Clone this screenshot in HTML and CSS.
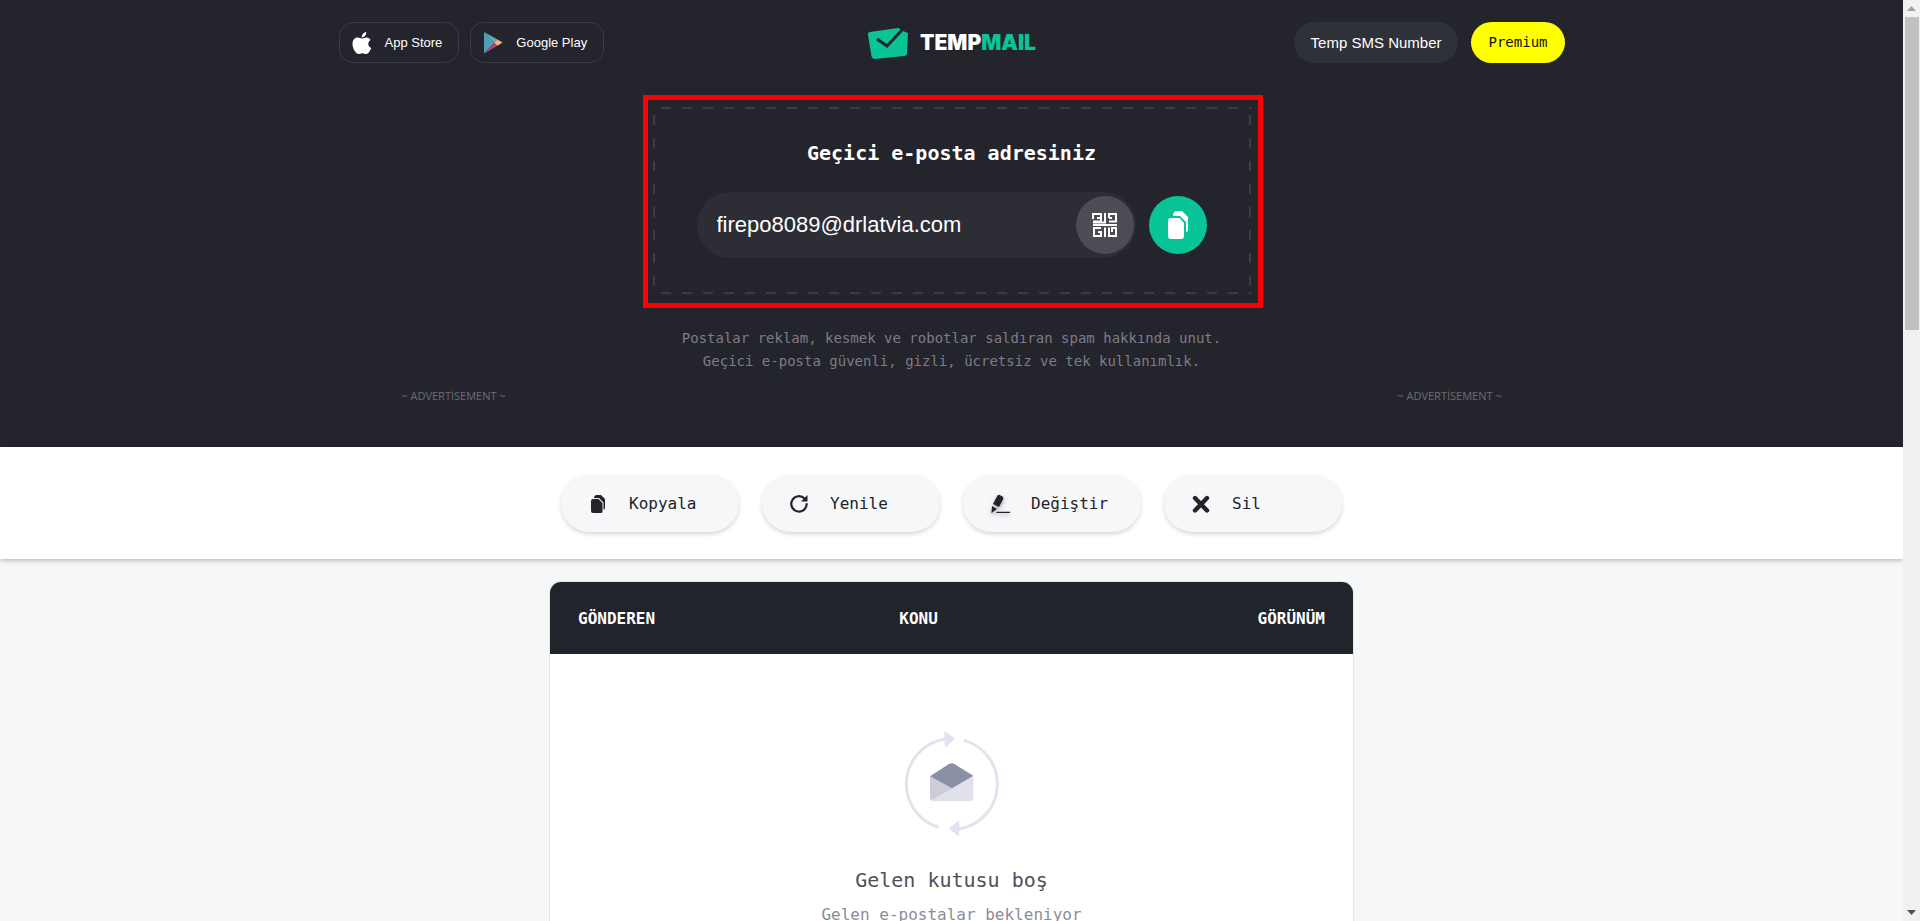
FILE: index.html
```html
<!DOCTYPE html>
<html lang="tr">
<head>
<meta charset="utf-8">
<meta name="viewport" content="width=device-width, initial-scale=1">
<title>Temp Mail</title>
<link rel="stylesheet" href="styles.css">
</head>
<body>
<div class="window">
  <div class="page">
    <section class="hero">
      <header class="topbar">
        <nav class="stores">
          <a class="store" href="#">
            <svg width="20" height="24" viewBox="0 0 20 24" fill="#fff" aria-hidden="true"><path d="M14.2 1c.2 1.700-.4 3.100-1.300 4.100-.9 1-2 1.500-3.200 1.400-.1-1.500.5-2.900 1.300-3.800C11.900 1.700 13.200 1.100 14.200 1z"/><path d="M18.600 9.100c-1.600 1-2.300 2.300-2.300 3.900 0 1.900 1.100 3.300 2.900 4-.5 1.600-1.300 3-2.300 4.300-.8 1.100-1.600 1.700-2.700 1.700-1.400 0-2-.8-3.900-.8s-2.600.8-3.900.8c-1.100 0-2-.7-2.900-1.900C1.600 18.500.5 15.600.5 12.900c0-3.800 2.200-6.400 5.200-6.400 1.700 0 3 1 4.300 1 1.200 0 2.700-1.100 4.700-1.100 1.600 0 3 .9 3.900 2.700z"/></svg>
            <span>App Store</span>
          </a>
          <a class="store" href="#">
            <svg width="20" height="22" viewBox="0 0 20 22" aria-hidden="true"><path d="M1 0v21.500L11 11z" fill="#4c9fb8"/><path d="M1 0l13.500 7.500L11 11z" fill="#5fb0a8"/><path d="M14.500 7.500L19.500 10.500l-5 3.200L11 11z" fill="#f6b08a"/><path d="M1 21.500L11 11l3.500 2.700z" fill="#b8456c"/></svg>
            <span>Google Play</span>
          </a>
        </nav>
        <a class="logo" href="#">
          <svg width="42" height="32" viewBox="0 0 42 32" aria-hidden="true"><path d="M3 5L31 1q2 0 2.500 2L41 6l-1 20q0 3-3 3L8 32q-3 0-3.500-3L1 8q-.3-3 2-3z" fill="#08c497"/><path d="M10 12l10 7L36 2" fill="none" stroke="#24242d" stroke-width="3"/><path d="M33 0h9v5l-4-1z" fill="#24242d"/></svg>
          <span class="wordmark">TEMP<span class="wordmark-mail">MAIL</span></span>
        </a>
        <nav class="account">
          <a class="pill pill-sms" href="#">Temp SMS Number</a>
          <a class="pill pill-premium" href="#">Premium</a>
        </nav>
      </header>

      <div class="hero-grid">
        <p class="ad">~ ADVERTİSEMENT ~</p>
        <div class="hero-main">
          <div class="address-box">
            <div class="highlight"></div>
            <h1 class="address-title"><label for="mail">Geçici e-posta adresiniz</label></h1>
            <div class="address-row">
              <div class="address-field">
                <input id="mail" class="address-input" type="text" value="firepo8089@drlatvia.com" readonly>
                <button class="round round-qr" type="button" aria-label="QR">
                  <svg width="26" height="26" viewBox="0 0 26 26" fill="none" stroke="#fff" stroke-width="2" aria-hidden="true"><path d="M5 6h3M1 7V2h8v7.500H1M13 1v9.500H1M13 13H1M17 6V2h7v7.500h-7M20 6h-3M13 13h12M9 16H2v8h7v-4H6M13 15.500V25M17 15.500V24h7v-8h-4v4"/></svg>
                </button>
              </div>
              <button class="round round-copy" type="button" aria-label="Kopyala">
                <svg width="20" height="28" viewBox="0 0 20 28" fill="#fff" aria-hidden="true"><path d="M3 7h8.500L16 12v13q0 3-3 3H3q-3 0-3-3V10q0-3 3-3z"/><path d="M5 5q0-5 4-5h5l6 6v12q0 3-2 3V11l-6-6z"/></svg>
              </button>
            </div>
          </div>
          <p class="intro">Postalar reklam, kesmek ve robotlar saldıran spam hakkında unut.<br>Geçici e-posta güvenli, gizli, ücretsiz ve tek kullanımlık.</p>
        </div>
        <p class="ad">~ ADVERTİSEMENT ~</p>
      </div>
    </section>

    <section class="actions">
      <button class="action" type="button">
        <svg width="20" height="20" viewBox="0 0 20 20" fill="#22232b" aria-hidden="true"><path d="M5 5h5.500l4 4v8.500q0 1.500-1.500 1.500H5q-2 0-2-2V7q0-2 2-2z"/><path d="M6 4q0-3 3-3h4l4 4v9q0 1.500-1.500 1.500V8.500L11 4z"/></svg>
        <span>Kopyala</span>
      </button>
      <button class="action" type="button">
        <svg width="20" height="20" viewBox="0 0 20 20" aria-hidden="true"><path d="M15.500 4.500A7.700 7.700 0 1 0 17.700 10" fill="none" stroke="#22232b" stroke-width="2.200" stroke-linecap="round"/><path d="M18.500 1v6.500H12z" fill="#22232b"/></svg>
        <span>Yenile</span>
      </button>
      <button class="action" type="button">
        <svg class="pen" width="20" height="20" viewBox="0 0 20 20" fill="#22232b" aria-hidden="true"><path d="M7.500 1.500q1.500-1.500 3 0l2 1q1.500 1 .5 3L9 13l-6-3z"/><path d="M2 12l5 3-5.500 4z"/><path d="M7 17.700h13v1.300H6z"/></svg>
        <span>Değiştir</span>
      </button>
      <button class="action" type="button">
        <svg width="20" height="20" viewBox="0 0 20 20" aria-hidden="true"><path d="M4 4l12 12.500M16 4L4 16.500" stroke="#22232b" stroke-width="4.400" stroke-linecap="round"/></svg>
        <span>Sil</span>
      </button>
    </section>

    <main class="inbox">
      <table class="mails">
        <thead>
          <tr><th class="col-from">GÖNDEREN</th><th class="col-subject">KONU</th><th class="col-view">GÖRÜNÜM</th></tr>
        </thead>
        <tbody>
          <tr>
            <td colspan="3">
              <div class="empty">
                <svg width="96" height="108" viewBox="311 93 288 324" aria-hidden="true">
                  <g fill="none" stroke="#e3e3f0" stroke-width="9" stroke-linecap="round"><path d="M412 384A136 136 0 0 1 436 120"/><path d="M494 125A136 136 0 0 1 474 390"/></g>
                  <path d="M434 100l26 18-24 24zM475 368l-26 20 25 20z" fill="#e3e3f0" stroke="#e3e3f0" stroke-width="5" stroke-linejoin="round"/>
                  <path d="M389 232h130v64q0 11-11 11H400q-11 0-11-11z" fill="#e1e1ee"/>
                  <path d="M389 232l66 36-61 36q-5-3-5-9z" fill="#cdcdd9"/>
                  <path d="M389 232l57-37q8-5 16 0l57 35-64 38z" fill="#8b8fa5"/>
                </svg>
                <h2 class="empty-title">Gelen kutusu boş</h2>
                <p class="empty-text">Gelen e-postalar bekleniyor</p>
              </div>
            </td>
          </tr>
        </tbody>
      </table>
    </main>
  </div>
  <div class="scrollbar" aria-hidden="true">
    <svg width="17" height="17" viewBox="0 0 17 17"><path d="M4 11h9L8.500 6z" fill="#a3a3a3"/></svg>
    <div class="thumb"></div>
    <svg width="17" height="17" viewBox="0 0 17 17"><path d="M4 6h9l-4.500 5z" fill="#505050"/></svg>
  </div>
</div>
</body>
</html>
```
FILE: styles.css
```css
* { box-sizing: border-box; }
body {
  margin: 0;
  font-family: "DejaVu Sans Mono", monospace;
  color: #22232b;
}
a { color: inherit; text-decoration: none; }
p, h1, h2 { margin: 0; }
button { border: 0; padding: 0; font: inherit; color: inherit; cursor: pointer; }

.window { display: flex; height: 100vh; overflow: hidden; }
.page { flex: 1; background: #f5f7f9; overflow: hidden; }

.scrollbar {
  width: 17px;
  background: #f1f1f1;
  display: flex;
  flex-direction: column;
}
.thumb { height: 34%; margin: 0 1px 0 2px; background: #c1c1c1; }
.scrollbar svg:last-child { margin-top: auto; }

.hero { background: #24242d; padding: 22px 16px 44px; }
.topbar, .hero-grid { max-width: 1226px; margin: 0 auto; display: grid; }
.topbar { grid-template-columns: 1fr auto 1fr; align-items: center; }
.stores { display: flex; gap: 11px; }
.store {
  display: flex;
  align-items: center;
  gap: 13px;
  height: 41px;
  padding: 0 16px 0 12px;
  border: 1px solid #3a3b44;
  border-radius: 14px;
  color: #fff;
  font: 13px "Liberation Sans", Arial, sans-serif;
}
.logo { display: flex; align-items: center; gap: 11px; color: #fff; }
.wordmark { font: 900 21px/28px Inter, sans-serif; }
.wordmark-mail { color: #08c497; }
.account { display: flex; justify-content: flex-end; gap: 13px; }
.pill { height: 41px; line-height: 41px; padding: 0 17px; border-radius: 21px; }
.pill-sms { background: #2f3139; color: #fff; font-family: "Liberation Sans", Arial, sans-serif; font-size: 15px; }
.pill-premium { background: #ff0; color: #111; font-size: 14px; }

.hero-grid { grid-template-columns: 230px 1fr 230px; align-items: end; margin-top: 44px; }
.ad {
  color: #6d6e76;
  font: 11px/14px "Open Sans", sans-serif;
  text-align: center;
}
.hero-main { padding-bottom: 30px; }
.address-box {
  position: relative;
  max-width: 598px;
  margin: 0 auto;
  padding: 34px 44px 36px;
  background:
    repeating-linear-gradient(90deg, transparent 0 8px, #3a3b43 8px 18px, transparent 18px 21px) top / 100% 2px no-repeat,
    repeating-linear-gradient(90deg, transparent 0 8px, #3a3b43 8px 18px, transparent 18px 21px) bottom / 100% 2px no-repeat,
    repeating-linear-gradient(transparent 0 8px, #3a3b43 8px 18px, transparent 18px 23px) left / 2px 100% no-repeat,
    repeating-linear-gradient(transparent 0 8px, #3a3b43 8px 18px, transparent 18px 23px) right / 2px 100% no-repeat;
}
.highlight {
  position: absolute;
  inset: -12px -12px -14px -10px;
  border: 5px solid #f00;
  pointer-events: none;
}
.address-title { color: #fff; font-size: 20px; line-height: 24px; text-align: center; }
.address-row { display: flex; align-items: center; gap: 13px; margin-top: 27px; }
.address-field {
  flex: 1;
  display: flex;
  align-items: center;
  padding: 4px 2px 4px 20px;
  border-radius: 33px;
  background: #2d2d36;
}
.address-input {
  flex: 1;
  min-width: 0;
  border: 0;
  padding: 0;
  outline: 0;
  background: transparent;
  color: #fff;
  font: 22px "Liberation Sans", Arial, sans-serif;
}
.round { width: 58px; height: 58px; border-radius: 50%; display: grid; place-items: center; }
.round-qr { background: #4c4c54; }
.round-copy { background: #08c497; }
.intro { margin-top: 33px; color: #7c7d85; font-size: 14px; line-height: 23px; text-align: center; }

.actions {
  position: relative;
  display: flex;
  justify-content: center;
  gap: 23px;
  padding: 28px 16px 27px;
  background: #fff;
  box-shadow: 0 1px 5px rgba(0, 0, 0, .3);
}
.action {
  display: flex;
  align-items: center;
  gap: 21px;
  width: 178px;
  height: 57px;
  padding: 0 27px;
  border-radius: 29px;
  background: #f5f7f9;
  box-shadow: 0 2px 4px rgba(0, 0, 0, .16);
  font-size: 16px;
}
.pen { filter: drop-shadow(0 2px 2px rgba(0, 0, 0, .35)); }

.inbox { padding: 22px 16px; }
.mails {
  width: 100%;
  max-width: 805px;
  margin: 0 auto;
  border: 1px solid #e4e6ec;
  border-radius: 12px;
  border-spacing: 0;
  background: #fff;
  overflow: hidden;
  table-layout: fixed;
}
th { height: 72px; padding: 0; background: #22242b; color: #fff; font-size: 16px; text-align: left; }
td { padding: 0; }
.col-from { width: 43%; padding-left: 28px; }
.mails .col-subject { padding-left: 4px; }
.mails .col-view { padding-right: 28px; text-align: right; }
.empty { display: flex; flex-direction: column; align-items: center; padding: 76px 0 80px; }
.empty-title { margin-top: 30px; color: #4f5058; font-size: 20px; font-weight: 400; line-height: 24px; }
.empty-text { margin-top: 13px; color: #8b8c98; font-size: 16px; line-height: 20px; }
```
